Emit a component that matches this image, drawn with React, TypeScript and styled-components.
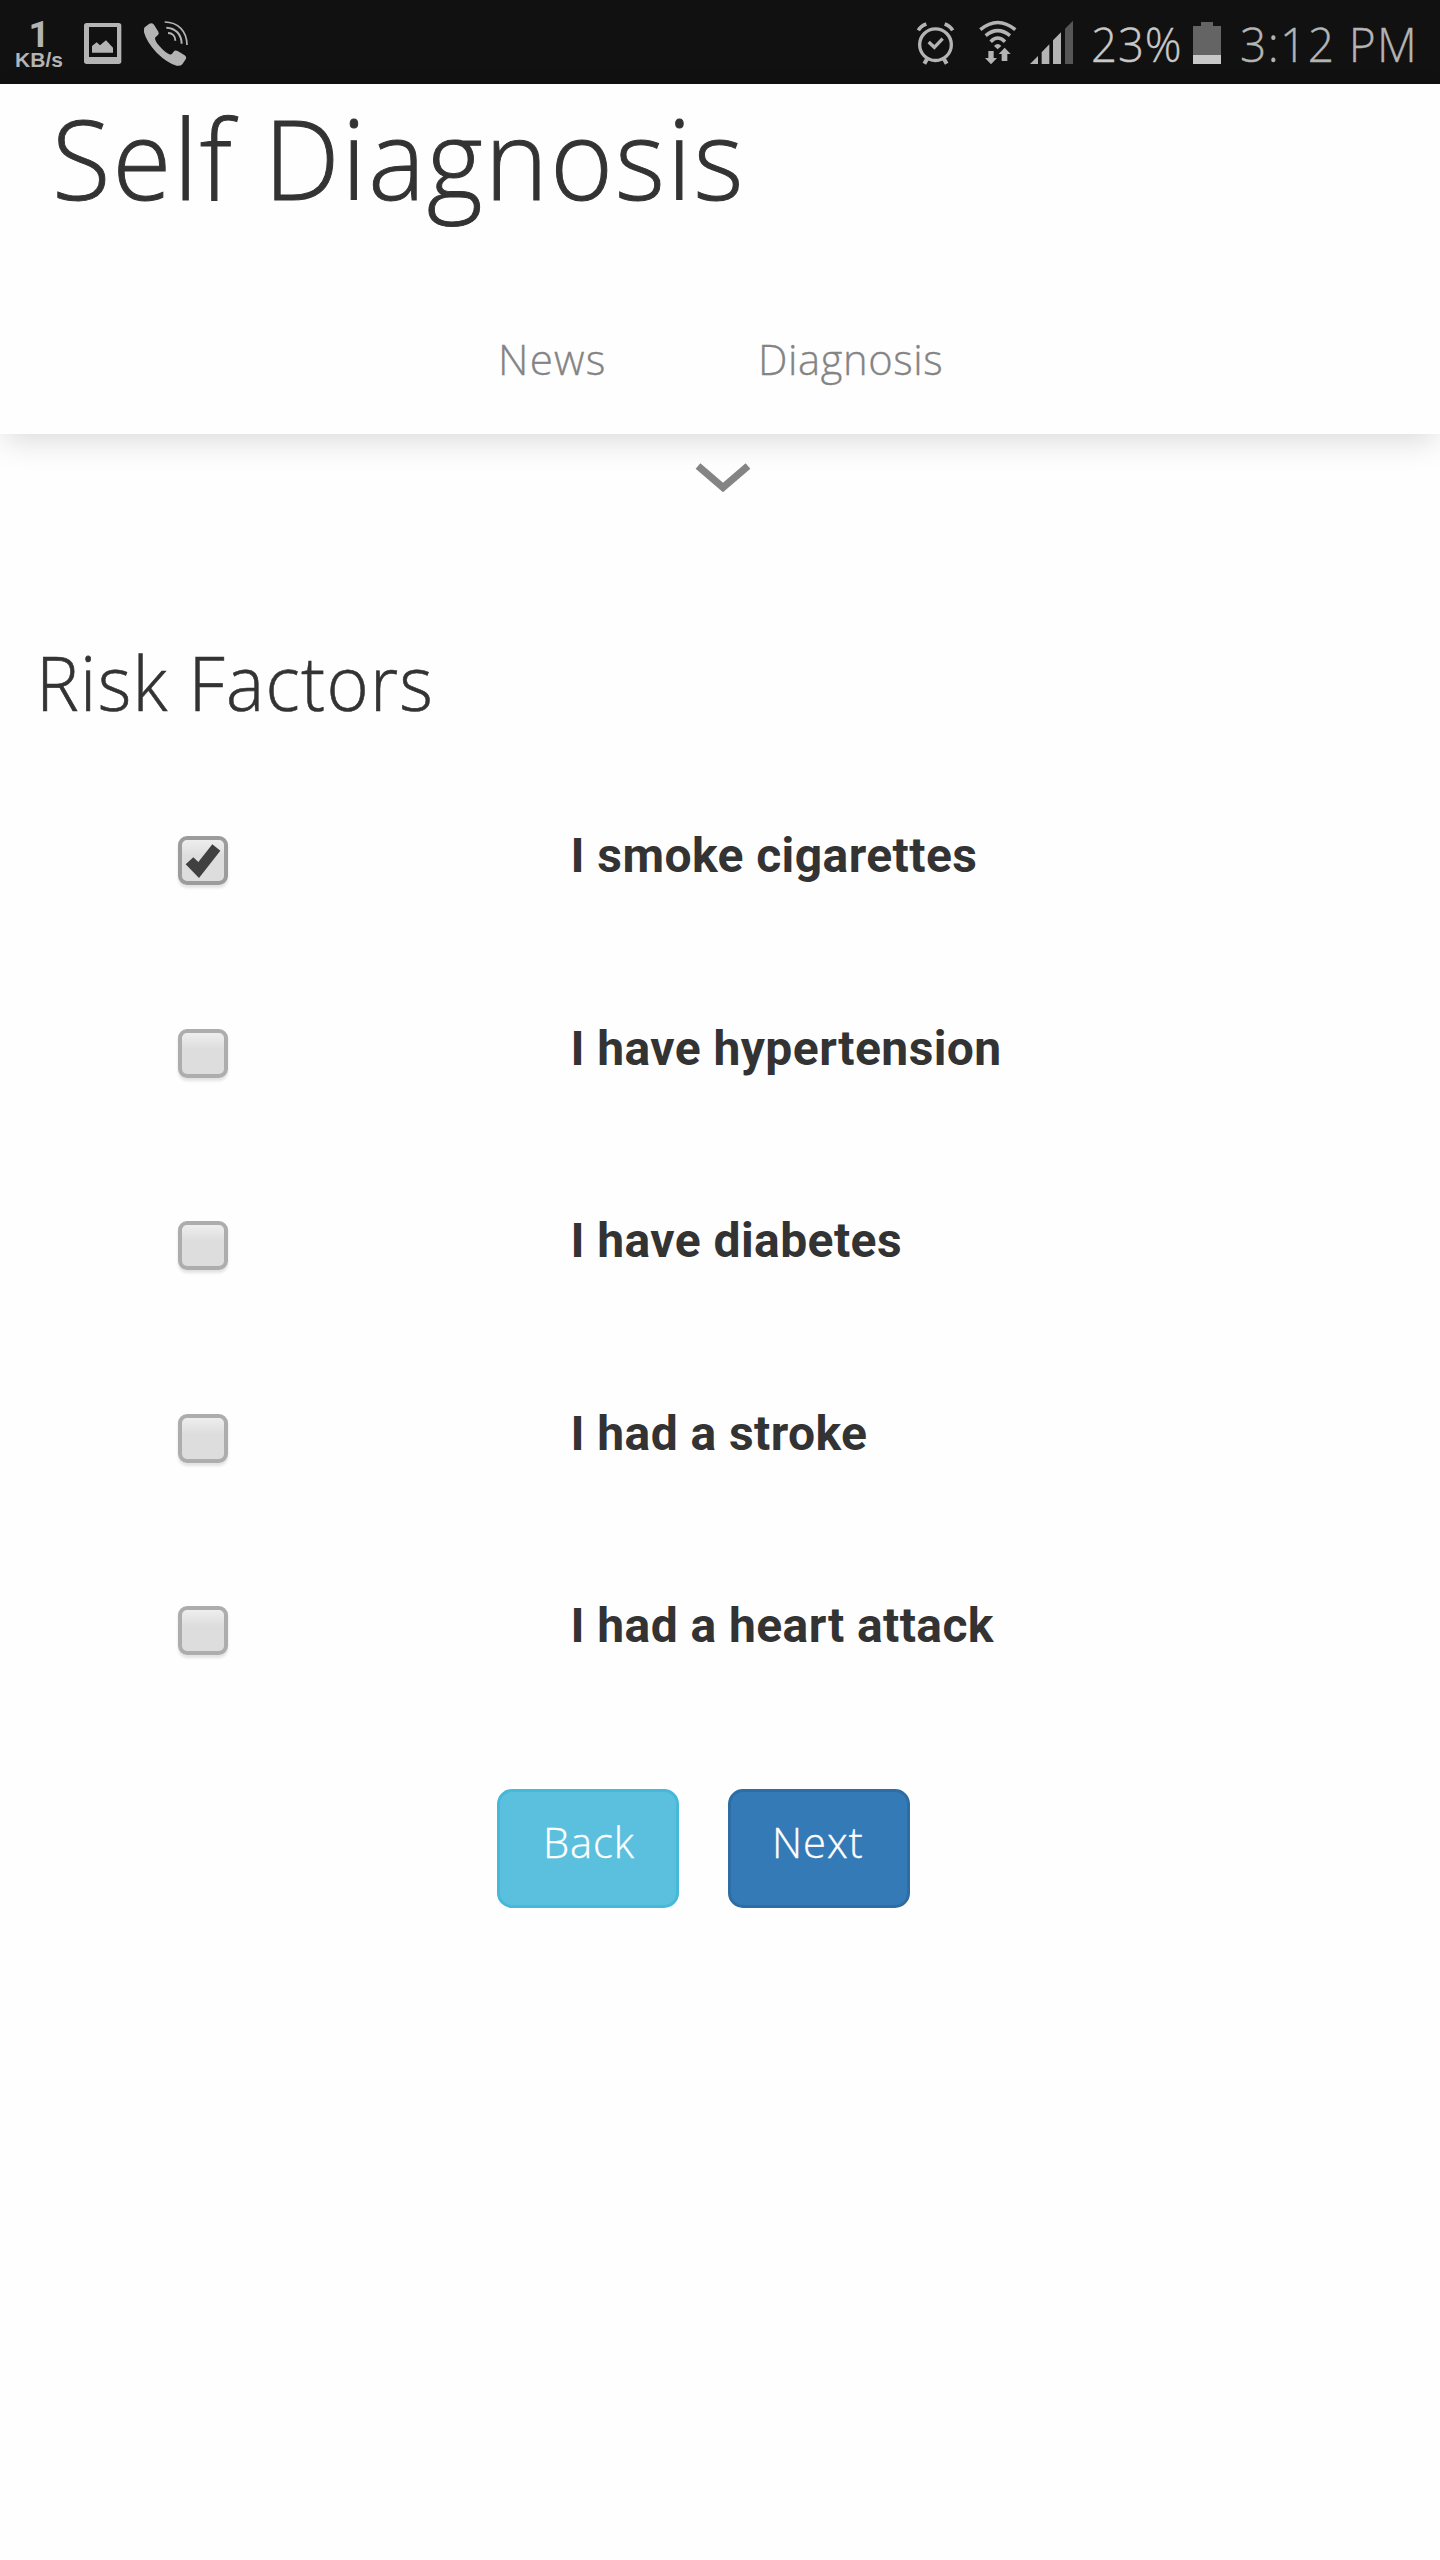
import React, { useState } from "react";
import styled, { createGlobalStyle } from "styled-components";

const GlobalStyle = createGlobalStyle`
  body {
    margin: 0;
    background: #fefefe;
    color: #333;
    font-family: "Open Sans", "Noto Sans", sans-serif;
  }
  *, *::before, *::after { box-sizing: border-box; }
`;

const Screen = styled.div`
  display: flex;
  flex-direction: column;
  width: 1440px;
  height: 2560px;
  overflow: hidden;
`;

/* Light text, slightly narrowed, tracked out and thickened */
const LightText = styled.span<{ $squeeze: number; $tracking: number; $stroke?: number }>`
  display: inline-block;
  font-weight: 300;
  white-space: nowrap;
  letter-spacing: ${(p) => p.$tracking}px;
  -webkit-text-stroke: ${(p) => p.$stroke ?? 0.35}px currentColor;
  transform: scaleX(${(p) => p.$squeeze});
  transform-origin: left center;
`;

const StatusBar = styled.header`
  display: flex;
  flex: none;
  justify-content: space-between;
  height: 84px;
  background: #111;
  color: #b4b4b4;
`;

const StatusGroup = styled.div<{ $padLeft?: number }>`
  display: flex;
  padding-left: ${(p) => p.$padLeft || 0}px;
`;

const NetSpeed = styled.div`
  display: flex;
  flex-direction: column;
  align-items: center;
  width: 48px;
  padding-top: 21px;
  margin-right: 19px;
`;

const SpeedValue = styled.span`
  font: 700 37px/27px Roboto, sans-serif;
`;

const SpeedUnit = styled.span`
  margin-top: 2px;
  font: 700 21px/20px "Liberation Sans", sans-serif;
`;

const StatusIcon = styled.svg<{ $gap: number }>`
  display: block;
  flex: none;
  margin-right: ${(p) => p.$gap}px;
`;

const StatusText = styled.div<{ $width: number; $color: string }>`
  width: ${(p) => p.$width}px;
  padding-top: 13px;
  font-size: 47.5px;
  line-height: 62px;
  color: ${(p) => p.$color};
`;

const AppHeader = styled.section`
  flex: none;
  height: 350px;
  padding-top: 1px;
  background: #fefefe;
  box-shadow: 0 10px 30px -4px rgba(0, 0, 0, 0.15);
`;

const Title = styled.h1`
  margin: 0;
  padding-left: 52px;
  font-size: 111px;
  line-height: 145px;
`;

const Nav = styled.nav`
  display: grid;
  grid-template-columns: 260px 260px;
  margin-top: 99px;
  padding-left: 498px;
`;

const NavLink = styled.a`
  color: #848484;
  font-size: 43px;
  line-height: 60px;
`;

const Chevron = styled.svg`
  display: block;
  flex: none;
  margin: 29px 0 0 695px;
`;

const Heading = styled.h2`
  margin: 139px 0 0;
  padding-left: 36px;
  font-size: 75px;
  line-height: 100px;
`;

const FactorList = styled.ul`
  list-style: none;
  margin: 89px 0 0;
  padding: 0 0 0 178px;
`;

const FactorRow = styled.li`
  display: grid;
  grid-template-columns: 392.5px 1fr;
  align-items: start;
  height: 192.5px;
`;

const CheckBox = styled.button<{ $checked: boolean }>`
  width: 50px;
  height: 49px;
  margin-top: 15px;
  padding: 0;
  border: 4px solid ${(p) => (p.$checked ? "#9c9c9c" : "#adadad")};
  border-radius: 9px;
  background: linear-gradient(#eeeeee, #dddddd 40%, #dddddd);
  box-shadow: 0 3px 3px rgba(0, 0, 0, 0.11);
`;

const CheckMark = styled.svg`
  display: block;
`;

const FactorLabel = styled.span`
  padding-top: 1px;
  font: 700 48px/68px Roboto, sans-serif;
  letter-spacing: 0.42px;
`;

const Actions = styled.div`
  display: flex;
  gap: 49px;
  margin-top: 5px;
  padding-left: 497px;
`;

const ActionButton = styled.button<{ $fill: string; $edge: string; $inset: number }>`
  display: flex;
  align-items: flex-start;
  width: 182px;
  height: 119px;
  padding: 20px 0 0 ${(p) => p.$inset}px;
  border: 3px solid ${(p) => p.$edge};
  border-radius: 15px;
  background: ${(p) => p.$fill};
  color: #fff;
  font: 300 43px/60px "Open Sans", sans-serif;
`;

const FACTORS = [
  "I smoke cigarettes",
  "I have hypertension",
  "I have diabetes",
  "I had a stroke",
  "I had a heart attack",
];

function PictureIcon() {
  return (
    <StatusIcon $gap={18} width="42" height="84" viewBox="246 0 126 252" fill="#b4b4b4">
      <path
        fillRule="evenodd"
        d="M260 69H356Q364 69 364 77V184Q364 192 356 192H260Q252 192 252 184V77Q252 69 260 69ZM267 81V171H351V81Z"
      />
      <path d="M276 158V138L290 127L300 136L318 121L339 143V158Z" />
    </StatusIcon>
  );
}

function CallIcon() {
  return (
    <StatusIcon $gap={0} width="50" height="84" viewBox="426 0 150 252" fill="none" stroke="#b4b4b4">
      <path
        fill="#b4b4b4"
        stroke="none"
        d="M434 82L448 71Q456 68 462 74L475 95Q479 101 473 106L465 113Q465 124 479 139Q494 157 508 163Q515 166 520 156Q525 149 533 153L554 166Q561 171 557 178L547 193Q541 199 530 197Q503 190 470 158Q440 127 432 97Q430 87 434 82Z"
      />
      <path strokeWidth="5" d="M494 66C534 66 561 94 561 135" />
      <path strokeWidth="6" d="M499 83C527 84 544 103 545 131" />
      <path strokeWidth="6" d="M504 99C517 99 526 108 526 122" />
    </StatusIcon>
  );
}

function AlarmIcon() {
  return (
    <StatusIcon $gap={21} width="42" height="84" viewBox="45 0 126 252" fill="none" stroke="#b4b4b4">
      <circle cx="106.5" cy="134" r="47.5" strokeWidth="10" />
      <path strokeWidth="10" d="M86 126L103 142L128 116" />
      <path strokeWidth="11" d="M55 91Q62 78 79 72M134 72Q151 78 158 91" />
      <path strokeWidth="12" d="M81 177L73 191M132 177L140 191" />
    </StatusIcon>
  );
}

function WifiIcon() {
  return (
    <StatusIcon $gap={11} width="40" height="84" viewBox="233 0 120 252" fill="none" stroke="#b4b4b4">
      <path strokeWidth="10.5" d="M240 89Q292 46 345 89" />
      <path strokeWidth="10.5" d="M256 107Q292 77 329 107" />
      <path strokeWidth="10.5" d="M271 125Q292 103 314 125" />
      <path fill="#b4b4b4" stroke="none" d="M281 138Q292 126 303 138L292 148Z" />
      <path
        fill="#b4b4b4"
        stroke="none"
        d="M264 153H280V174H290L272 193L254 174H264ZM304 183V162H295L313 143L331 162H321V183Z"
      />
    </StatusIcon>
  );
}

function SignalIcon() {
  return (
    <StatusIcon $gap={16} width="46" height="84" viewBox="387 0 138 252" fill="#b4b4b4">
      <path d="M390 192L414 168V192ZM425 192V157L448 133V192ZM459 192V121L483 97V192Z" />
      <path fill="#565656" d="M495 192V86L519 62V192Z" />
    </StatusIcon>
  );
}

function BatteryIcon() {
  return (
    <StatusIcon $gap={19} width="28" height="84" viewBox="339 0 84 252">
      <path fill="#646464" d="M363 66H399V78H423V165H339V78H363Z" />
      <path fill="#c8c8c8" d="M339 165H423V192H339Z" />
    </StatusIcon>
  );
}

export default function App() {
  const [checked, setChecked] = useState<boolean[]>([true, false, false, false, false]);
  const toggle = (i: number) => setChecked((c) => c.map((v, j) => (i === j ? !v : v)));

  return (
    <>
      <GlobalStyle />
      <Screen>
        <StatusBar>
          <StatusGroup $padLeft={15}>
            <NetSpeed>
              <SpeedValue>1</SpeedValue>
              <SpeedUnit>KB/s</SpeedUnit>
            </NetSpeed>
            <PictureIcon />
            <CallIcon />
          </StatusGroup>
          <StatusGroup>
            <AlarmIcon />
            <WifiIcon />
            <SignalIcon />
            <StatusText $width={102} $color="#c8c8c8">
              <LightText $squeeze={0.96} $tracking={0.9}>23%</LightText>
            </StatusText>
            <BatteryIcon />
            <StatusText $width={200} $color="#b4b4b4">
              <LightText $squeeze={0.97} $tracking={1.4}>3:12 PM</LightText>
            </StatusText>
          </StatusGroup>
        </StatusBar>

        <AppHeader>
          <Title>
            <LightText $squeeze={0.965} $tracking={2.2} $stroke={1}>Self Diagnosis</LightText>
          </Title>
          <Nav>
            <NavLink>
              <LightText $squeeze={0.98} $tracking={1.3}>News</LightText>
            </NavLink>
            <NavLink>
              <LightText $squeeze={0.97} $tracking={0.6}>Diagnosis</LightText>
            </NavLink>
          </Nav>
        </AppHeader>

        <Chevron width="56" height="30" viewBox="0 0 56 30" fill="none" stroke="#848484" strokeWidth="7.3">
          <path d="M3 3L28 24.5L53 3" />
        </Chevron>

        <Heading>
          <LightText $squeeze={0.96} $tracking={1.35} $stroke={0.6}>Risk Factors</LightText>
        </Heading>

        <FactorList>
          {FACTORS.map((label, i) => (
            <FactorRow key={label}>
              <CheckBox $checked={checked[i]} onClick={() => toggle(i)}>
                {checked[i] && (
                  <CheckMark width="42" height="41" viewBox="96 90 126 123" fill="#404040">
                    <path d="M107 163L130 142L145 156L187 103L211 122L147 204Z" />
                  </CheckMark>
                )}
              </CheckBox>
              <FactorLabel>{label}</FactorLabel>
            </FactorRow>
          ))}
        </FactorList>

        <Actions>
          <ActionButton $fill="#5bc0de" $edge="#46b8da" $inset={43}>
            <LightText $squeeze={0.97} $tracking={0.9}>Back</LightText>
          </ActionButton>
          <ActionButton $fill="#337ab7" $edge="#2e6da4" $inset={41}>
            <LightText $squeeze={0.97} $tracking={1}>Next</LightText>
          </ActionButton>
        </Actions>
      </Screen>
    </>
  );
}
